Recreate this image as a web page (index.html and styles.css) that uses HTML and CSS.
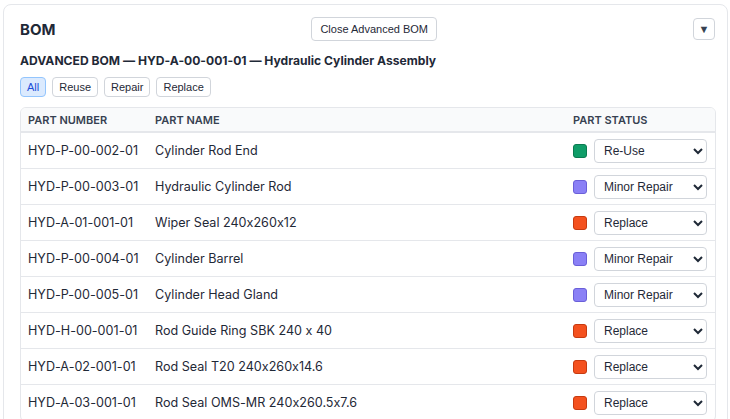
FILE: index.html
```html
<!DOCTYPE html>
<html lang="en">
<head>
  <meta charset="UTF-8" />
  <meta name="viewport" content="width=device-width, initial-scale=1.0" />
  <title>BOM</title>
  <link rel="stylesheet" href="styles.css">
</head>

<body>
  <div class="panel">
    <div class="panel-head">
      <h3>BOM</h3>
      <button class="btn">Close Advanced BOM</button>
      <button class="toggle-btn">&#9660;</button>
    </div>

    <h4 class="subtitle">ADVANCED BOM — HYD-A-00-001-01 — Hydraulic Cylinder Assembly</h4>

    <div class="filters">
      <button class="filter active">All</button>
      <button class="filter">Reuse</button>
      <button class="filter">Repair</button>
      <button class="filter">Replace</button>
    </div>

    <div class="table-wrap">
      <table class="bom-table">
        <colgroup>
          <col class="col-num">
          <col>
          <col class="col-status">
        </colgroup>
        <thead>
          <tr>
            <th>Part Number</th>
            <th>Part Name</th>
            <th>Part Status</th>
          </tr>
        </thead>
        <tbody>
          <tr>
            <td>HYD-P-00-002-01</td>
            <td>Cylinder Rod End</td>
            <td><div class="status"><span class="swatch reuse"></span><select><option>Re-Use</option><option>Minor Repair</option><option>Replace</option></select></div></td>
          </tr>
          <tr>
            <td>HYD-P-00-003-01</td>
            <td>Hydraulic Cylinder Rod</td>
            <td><div class="status"><span class="swatch repair"></span><select><option>Minor Repair</option><option>Re-Use</option><option>Replace</option></select></div></td>
          </tr>
          <tr>
            <td>HYD-A-01-001-01</td>
            <td>Wiper Seal 240x260x12</td>
            <td><div class="status"><span class="swatch replace"></span><select><option>Replace</option><option>Re-Use</option><option>Minor Repair</option></select></div></td>
          </tr>
          <tr>
            <td>HYD-P-00-004-01</td>
            <td>Cylinder Barrel</td>
            <td><div class="status"><span class="swatch repair"></span><select><option>Minor Repair</option><option>Re-Use</option><option>Replace</option></select></div></td>
          </tr>
          <tr>
            <td>HYD-P-00-005-01</td>
            <td>Cylinder Head Gland</td>
            <td><div class="status"><span class="swatch repair"></span><select><option>Minor Repair</option><option>Re-Use</option><option>Replace</option></select></div></td>
          </tr>
          <tr>
            <td>HYD-H-00-001-01</td>
            <td>Rod Guide Ring SBK 240 x 40</td>
            <td><div class="status"><span class="swatch replace"></span><select><option>Replace</option><option>Re-Use</option><option>Minor Repair</option></select></div></td>
          </tr>
          <tr>
            <td>HYD-A-02-001-01</td>
            <td>Rod Seal T20 240x260x14.6</td>
            <td><div class="status"><span class="swatch replace"></span><select><option>Replace</option><option>Re-Use</option><option>Minor Repair</option></select></div></td>
          </tr>
          <tr>
            <td>HYD-A-03-001-01</td>
            <td>Rod Seal OMS-MR 240x260.5x7.6</td>
            <td><div class="status"><span class="swatch replace"></span><select><option>Replace</option><option>Re-Use</option><option>Minor Repair</option></select></div></td>
          </tr>
        </tbody>
      </table>
    </div>
  </div>
</body>
</html>
```

FILE: styles.css
```css
:root {
  --text: #1f2937;
  --muted: #374151;
  --border: #e5e7eb;
  --control-border: #d1d5db;
}

body {
  margin: 0;
  padding: 4px 2px 0 3px;
  font-family: Inter, 'Noto Sans', sans-serif;
  font-feature-settings: 'calt' 0;
  color: var(--text);
  background: #fff;
}

.panel {
  border: 1px solid var(--border);
  border-radius: 8px;
  background: #fff;
  padding: 12px 11px 20px 16px;
}

.panel-head {
  display: flex;
  justify-content: space-between;
  align-items: center;
  height: 24px;
}

.panel-head h3 {
  margin: 0;
  font-size: 15px;
  font-weight: 700;
}

.btn,
.filter,
.toggle-btn,
select {
  font-family: 'Liberation Sans', Arial, sans-serif;
  color: var(--text);
  background: #fff;
  border: 1px solid var(--control-border);
  border-radius: 4px;
}

.btn {
  height: 24px;
  padding: 0 8px;
  font-size: 11px;
}

.toggle-btn {
  width: 22px;
  height: 22px;
  padding: 0;
  font-size: 11px;
  color: var(--muted);
  margin-right: 1px;
}

.subtitle {
  margin: 12px 0 8px;
  font-size: 12.1px;
  font-weight: 700;
  line-height: 16px;
}

.filters {
  display: flex;
  gap: 6px;
}

.filter {
  height: 20px;
  padding: 0 6px;
  font-size: 11px;
}

.filter.active {
  background: #dbeafe;
  border-color: #93c5fd;
  color: #1d4ed8;
}

.table-wrap {
  margin-top: 10px;
  border: 1px solid var(--border);
  border-radius: 6px;
  overflow: hidden;
}

.bom-table {
  width: 100%;
  border-collapse: collapse;
  table-layout: fixed;
  font-size: 12.6px;
}

.col-num {
  width: 127px;
}

.col-status {
  width: 150px;
}

.bom-table th {
  text-align: left;
  padding: 6px 7px 5px;
  line-height: 12px;
  font-size: 11px;
  font-weight: 600;
  text-transform: uppercase;
  color: var(--muted);
  background: #f9fafb;
  border-bottom: 2px solid var(--border);
}

.bom-table th:last-child {
  padding-left: 8px;
}

.bom-table td {
  padding: 5px 7px;
  line-height: 25px;
  border-bottom: 1px solid var(--border);
  white-space: nowrap;
}

.bom-table td:last-child {
  padding: 5px 8px;
}

.status {
  display: flex;
  align-items: center;
  gap: 7px;
  height: 25px;
}

.swatch {
  width: 12px;
  height: 12px;
  border-radius: 3px;
  border: 1px solid;
  flex-shrink: 0;
}

.swatch.reuse {
  background: #0f9d68;
  border-color: #0b7a50;
}

.swatch.repair {
  background: #8a80f6;
  border-color: #6a5fd8;
}

.swatch.replace {
  background: #f4511e;
  border-color: #c63a10;
}

select {
  width: 114px;
  height: 24px;
  padding: 0 4px 0 5px;
  font-size: 12px;
}
```
